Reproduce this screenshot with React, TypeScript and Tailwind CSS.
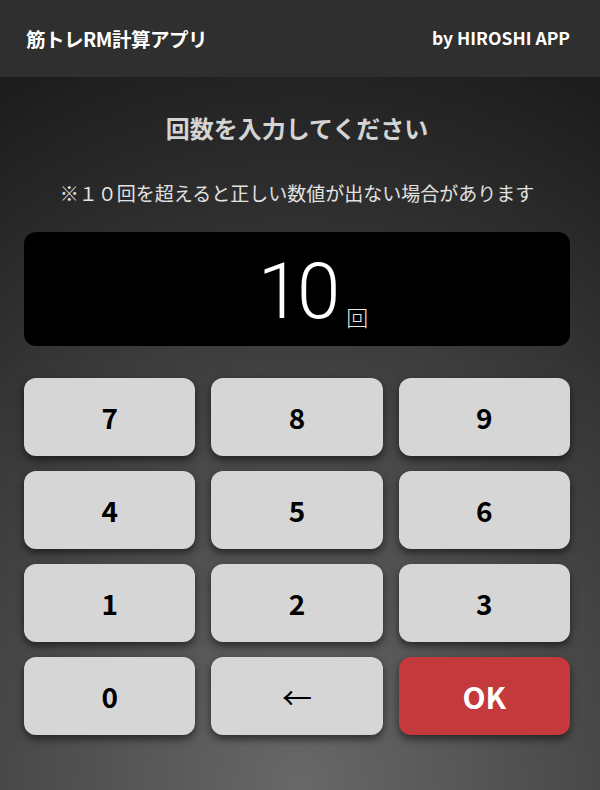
import React, { useState } from 'react'

const KEYS = ['7', '8', '9', '4', '5', '6', '1', '2', '3', '0', '←', 'OK']

export default function App() {
  const [value, setValue] = useState('10')

  const press = (k: string) => {
    if (k === '←') return setValue((v) => v.slice(0, -1))
    if (k === 'OK') return
    setValue((v) => (v.length >= 2 ? v : v === '0' ? k : v + k))
  }

  return (
    <div className="flex min-h-screen w-full flex-col bg-[radial-gradient(ellipse_110%_100%_at_50%_100%,#686868_0%,#4c4c4c_40%,#2e2e2e_75%,#1c1c1c_100%)] font-['Noto_Sans_CJK_JP',sans-serif]">
      <header className="flex h-[77px] items-center justify-between bg-[#2f2f2f] pr-[30px] pl-[26px]">
        <h1 className="text-[19.5px] font-bold tracking-[-0.5px] text-white">
          筋トレRM計算アプリ
        </h1>
        <span className="text-[17.5px] font-semibold text-white">by HIROSHI APP</span>
      </header>

      <main className="flex flex-col pr-[30px] pl-6">
        <h2 className="mt-[33px] text-center text-[24px] leading-9 font-bold text-[#d4d4d4]">
          回数を入力してください
        </h2>
        <p className="mt-[33px] text-center text-[19px] leading-7 text-[#e2e2e2]">
          ※１０回を超えると正しい数値が出ない場合があります
        </p>

        <div className="mt-[25px] flex h-[114px] items-center justify-center rounded-xl bg-black">
          <div className="relative mt-[6px]">
            <span className="font-['Roboto',sans-serif] text-[78px] leading-none font-light tracking-[-4px] text-white">
              {value}
            </span>
            <span className="absolute bottom-[4px] left-[calc(100%+10px)] text-[22px] leading-none font-light text-[#e8e8e8]">
              回
            </span>
          </div>
        </div>

        <div className="mt-[32px] grid grid-cols-3 gap-x-4 gap-y-[15px]">
          {KEYS.map((k) => (
            <button
              key={k}
              onClick={() => press(k)}
              className={
                k === 'OK'
                  ? 'flex h-[78px] items-center justify-center rounded-xl bg-[#c4393b] text-[30px] font-semibold text-white shadow-[0_4px_8px_rgba(0,0,0,0.55)]'
                  : k === '←'
                    ? 'flex h-[78px] items-center justify-center rounded-xl bg-[#d6d6d6] text-[30px] font-normal text-black shadow-[0_4px_8px_rgba(0,0,0,0.55)]'
                    : 'flex h-[78px] items-center justify-center rounded-xl bg-[#d6d6d6] text-[28px] font-semibold text-black shadow-[0_4px_8px_rgba(0,0,0,0.55)]'
              }
            >
              {k}
            </button>
          ))}
        </div>
      </main>
    </div>
  )
}
